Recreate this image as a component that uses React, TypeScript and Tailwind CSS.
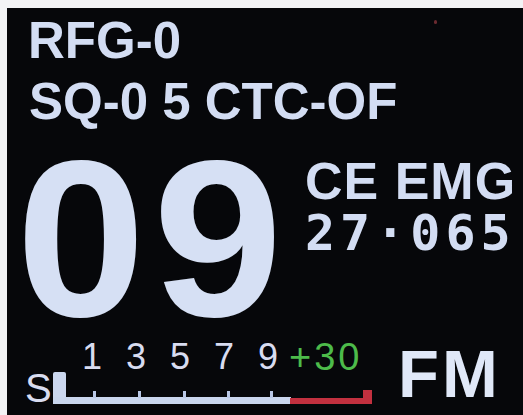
import React from "react";

const sans = { fontFamily: '"Liberation Sans", Arial, sans-serif' };
const mono = { fontFamily: '"DejaVu Sans Mono", "Liberation Mono", monospace' };

export default function App() {
  const scale = ["1", "3", "5", "7", "9"];
  return (
    <div className="w-[523px] h-[415px] bg-[#f3f3f5] pt-[8px] pl-[7px] overflow-hidden" style={sans}>
      <div className="relative h-full bg-[#06070a] flex flex-col text-[#d3ddf3]">
        <div className="absolute left-[427px] top-[12px] w-[3px] h-[4px] rounded-full bg-[#6a2a30]" />
        <div className="mt-[7px] pl-[21px] h-[51px] text-[51px] leading-none font-bold">RFG-0</div>
        <div className="mt-[10px] pl-[22px] h-[51px] text-[51px] leading-none font-bold whitespace-nowrap">
          SQ-0 5 CTC-OF
        </div>
        <div className="mt-[17px] flex h-[190px]">
          <div className="w-[298px] shrink-0 pl-[9px]">
            <div className="origin-left scale-x-[1.05] text-[222px] leading-[190px] font-bold tracking-[7px] text-[#d6e0f4]">
              09
            </div>
          </div>
          <div className="flex flex-col pt-[11px]">
            <div className="h-[52px] text-[52px] leading-none font-bold tracking-[1px] whitespace-nowrap">CE EMG</div>
            <div className="mt-[1px] h-[50px] text-[50px] leading-none font-bold tracking-[5px] whitespace-nowrap" style={mono}>
              27·065
            </div>
          </div>
        </div>
        <div className="mt-[6px] flex items-start">
          <div className="w-[391px] shrink-0 pl-[18px] flex flex-col">
            <div className="mt-[3px] h-[28px] pl-[45px] flex text-[36px] leading-[28px] text-[#d8dcf0]">
              {scale.map((s) => (
                <span key={s} className="w-[44px] text-center">{s}</span>
              ))}
              <span className="ml-[-1px] text-[38px] tracking-[3px] text-[#4dbb4a]">+30</span>
            </div>
            <div className="flex items-start h-[34px]">
              <span className="text-[40px] leading-[34px] text-[#d8dcf0]">S</span>
              <svg width="325" height="34" viewBox="0 0 325 34" className="shrink-0">
                <rect x="1" y="1" width="13" height="32" rx="2" fill="#cbd7ef" />
                <rect x="1" y="26" width="238" height="7" fill="#c9d6ee" />
                <rect x="238" y="27" width="82" height="6" fill="#c2303f" />
                <rect x="311" y="19" width="9" height="14" fill="#c2303f" />
                {[41, 86, 131, 175, 218].map((x) => (
                  <rect key={x} x={x} y="20" width="3" height="7" fill="#b9c8e6" />
                ))}
              </svg>
            </div>
          </div>
          <div className="text-[67px] leading-none font-bold tracking-[3px] text-[#e0e8f8]">FM</div>
        </div>
      </div>
    </div>
  );
}
